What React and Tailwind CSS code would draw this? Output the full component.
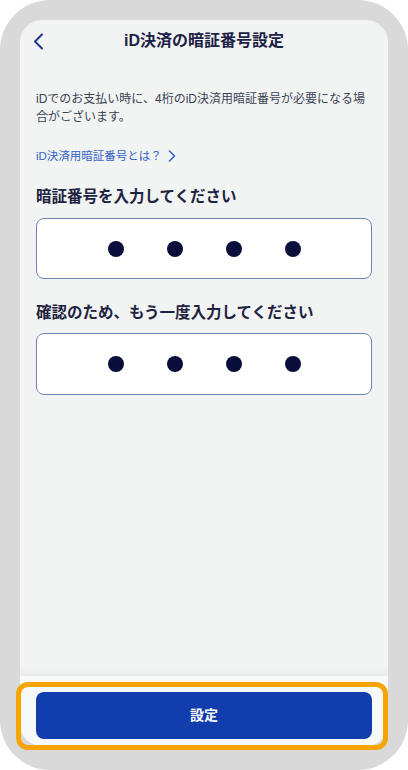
import React from "react";

const Dots = () => (
  <div className="flex h-full items-center justify-center gap-[43px]">
    {[0, 1, 2, 3].map((i) => (
      <span key={i} className="block h-[16px] w-[16px] rounded-full bg-[#0a0e3a]" />
    ))}
  </div>
);

export default function App() {
  return (
    <div
      className="relative h-[770px] w-[408px] bg-white"
      style={{ fontFamily: '"Liberation Sans", "Noto Sans CJK JP", sans-serif' }}
    >
      <div className="flex h-full w-full rounded-[50px] bg-[#d9d9d9] px-[20px] pt-[20px] pb-[24px]">
        <div className="flex flex-1 flex-col overflow-hidden rounded-[22px] bg-[#f2f4f3]">
          <div className="relative flex h-[42px] items-center justify-center">
            <svg
              className="absolute left-[13px] top-[13px]"
              width="11"
              height="17"
              viewBox="0 0 11 17"
              fill="none"
            >
              <path d="M9 1.5L2 8.5L9 15.5" stroke="#24368a" strokeWidth="2" strokeLinecap="round" strokeLinejoin="round" />
            </svg>
            <span className="text-[16px] font-bold text-[#1b2145]">iD決済の暗証番号設定</span>
          </div>
          <div className="flex flex-1 flex-col px-[16px]">
            <p className="mt-[28px] text-[12px] leading-[18px] text-[#3a4152]">
              iDでのお支払い時に、4桁のiD決済用暗証番号が必要になる場合がございます。
            </p>
            <div className="mt-[21px] flex items-center gap-[6px] text-[11.5px] leading-[18px] text-[#3563c6]">
              <span>iD決済用暗証番号とは？</span>
              <svg width="8" height="12" viewBox="0 0 8 12" fill="none">
                <path d="M1.5 1L6.5 6L1.5 11" stroke="#3563c6" strokeWidth="1.6" strokeLinecap="round" strokeLinejoin="round" />
              </svg>
            </div>
            <h2 className="mt-[21px] text-[15.5px] font-bold leading-[22px] text-[#1e2341]">
              暗証番号を入力してください
            </h2>
            <div className="mt-[10px] h-[61px] rounded-[8px] border border-[#7083b0] bg-white">
              <Dots />
            </div>
            <h2 className="mt-[23px] text-[15.5px] font-bold leading-[22px] text-[#1e2341]">
              確認のため、もう一度入力してください
            </h2>
            <div className="mt-[9px] h-[62px] rounded-[8px] border border-[#7083b0] bg-white">
              <Dots />
            </div>
            <div className="flex-1" />
          </div>
          <div className="h-[70px] bg-[#f7f9f9] px-[16px] pt-[16px] shadow-[0_-3px_8px_rgba(0,0,0,0.06)]">
            <div className="flex h-[47px] items-center justify-center rounded-[8px] bg-[#123ead] text-[14px] font-bold text-white">
              設定
            </div>
          </div>
        </div>
      </div>
      <div className="pointer-events-none absolute left-[16px] top-[682px] h-[68px] w-[372px] rounded-[12px] border-[5px] border-[#f6a400]" />
    </div>
  );
}
